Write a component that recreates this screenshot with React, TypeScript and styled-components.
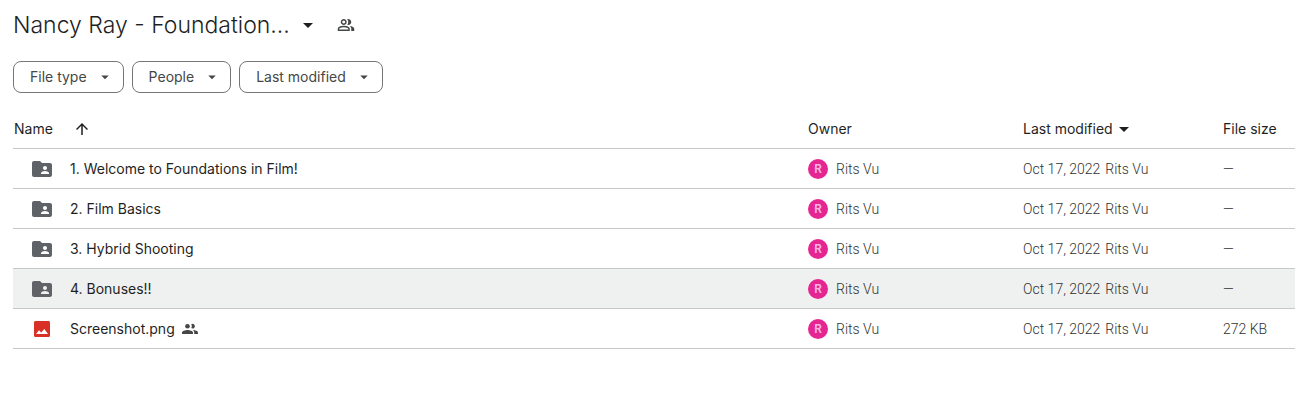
import React from "react";
import styled, { createGlobalStyle } from "styled-components";

const GlobalStyle = createGlobalStyle`
  * { box-sizing: border-box; }
  body {
    margin: 0;
    background: #ffffff;
    color: #1f1f1f;
    font-family: Inter, "Liberation Sans", sans-serif;
    font-size: 14px;
    line-height: 20px;
  }
`;

const Page = styled.main`
  padding: 8px 0 0 13px;
`;

const TitleBar = styled.header`
  display: flex;
  align-items: center;
  height: 33px;
`;

const Title = styled.h1`
  margin: 0;
  font-family: Inter, sans-serif;
  font-size: 23px;
  line-height: 32px;
  font-weight: 300;
  white-space: nowrap;
`;

const IconButton = styled.button<{ $gap: number; $color?: string }>`
  display: flex;
  margin: 0 0 0 ${(p) => p.$gap}px;
  padding: 0;
  border: 0;
  background: none;
  color: ${(p) => p.$color ?? "#1f1f1f"};
  cursor: pointer;
`;

const Icon = styled.svg<{ $size: number }>`
  display: block;
  flex: none;
  width: ${(p) => p.$size}px;
  height: ${(p) => p.$size}px;
  fill: currentColor;
`;

const Filters = styled.div`
  display: flex;
  gap: 8px;
  margin-top: 20px;
`;

const Chip = styled.button`
  display: flex;
  align-items: center;
  gap: 9px;
  height: 32px;
  padding: 0 9px 0 16px;
  border: 1px solid #747775;
  border-radius: 8px;
  background: #ffffff;
  color: #444746;
  font: inherit;
  white-space: nowrap;
  cursor: pointer;
`;

const FileTable = styled.table`
  width: 100%;
  margin-top: 16px;
  border-collapse: separate;
  border-spacing: 0;
  table-layout: fixed;
`;

const Col = styled.col<{ $width?: number }>`
  width: ${(p) => (p.$width ? `${p.$width}px` : "auto")};
`;

const HeadCell = styled.th`
  height: 40px;
  padding: 0 0 0 1px;
  border-bottom: 1px solid #c7c7c7;
  text-align: left;
  font-weight: 400;
  white-space: nowrap;
`;

const HeadContent = styled.div<{ $gap?: number }>`
  display: flex;
  align-items: center;
  gap: ${(p) => p.$gap ?? 0}px;
`;

const Row = styled.tr<{ $active?: boolean }>`
  background: ${(p) => (p.$active ? "#eff1f0" : "transparent")};
`;

const Cell = styled.td`
  height: 40px;
  padding: 0 0 0 1px;
  border-bottom: 1px solid #c7c7c7;
  color: #303332;
  font-family: Roboto, sans-serif;
  font-weight: 300;
  white-space: nowrap;
`;

const NameCell = styled(Cell)`
  padding-left: 17px;
  color: #1f1f1f;
  font-family: Inter, sans-serif;
  font-weight: 400;
`;

const NameContent = styled.div`
  display: flex;
  align-items: center;
`;

const FileIcon = styled.span<{ $color: string }>`
  display: flex;
  justify-content: center;
  width: 24px;
  margin-right: 16px;
  color: ${(p) => p.$color};
`;

const Shared = styled.span`
  margin-left: 7px;
  color: #444746;
`;

const Owner = styled.div`
  display: flex;
  align-items: center;
  gap: 8px;
`;

const Avatar = styled.span`
  display: flex;
  align-items: center;
  justify-content: center;
  width: 20px;
  height: 20px;
  border-radius: 50%;
  background: #e52592;
  color: #fbb4df;
  font-size: 12px;
  font-weight: 600;
`;

const Modified = styled.div`
  display: flex;
  gap: 5px;
`;

const DropArrow = ({ size }: { size: number }) => (
  <Icon $size={size} viewBox="0 0 24 24" aria-hidden="true">
    <path d="M7 10l5 5 5-5z" />
  </Icon>
);

const Caret = () => (
  <Icon $size={10} viewBox="0 0 10 10" aria-hidden="true">
    <path d="M0 3l5 5 5-5z" />
  </Icon>
);

const UpArrow = () => (
  <Icon $size={18} viewBox="0 0 24 24" aria-hidden="true">
    <path d="M4 12l1.41 1.41L11 7.83V20h2V7.83l5.58 5.59L20 12l-8-8-8 8z" />
  </Icon>
);

const GroupOutline = () => (
  <Icon $size={18} viewBox="0 0 24 24" aria-hidden="true">
    <path
      fillRule="evenodd"
      d="M1 20v-2.8q0-.85.438-1.562.437-.713 1.162-1.088 1.55-.775 3.15-1.163Q7.35 13 9 13t3.25.387q1.6.388 3.15 1.163.725.375 1.162 1.088Q17 16.35 17 17.2V20ZM3 18h12v-.8q0-.275-.137-.5-.138-.225-.363-.35-1.35-.675-2.725-1.013Q10.4 15 9 15t-2.775.337Q4.85 15.675 3.5 16.35q-.225.125-.362.35-.138.225-.138.5ZM19 20v-3q0-1.1-.613-2.113-.612-1.012-1.737-1.737 1.275.15 2.4.512 1.125.363 2.1.888.9.5 1.375 1.112Q23 16.275 23 17v3ZM9 12q-1.65 0-2.825-1.175Q5 9.65 5 8q0-1.65 1.175-2.825Q7.35 4 9 4q1.65 0 2.825 1.175Q13 6.35 13 8q0 1.65-1.175 2.825Q10.65 12 9 12ZM9 10q.825 0 1.413-.588Q11 8.825 11 8t-.587-1.412Q9.825 6 9 6t-1.412.588Q7 7.175 7 8t.588 1.412Q8.175 10 9 10ZM19 8q0 1.65-1.175 2.825Q16.65 12 15 12q-.275 0-.7-.062-.425-.063-.7-.138.675-.8 1.037-1.775Q15 9.05 15 8q0-1.05-.363-2.025Q14.275 5 13.6 4.2q.35-.125.7-.163Q14.65 4 15 4q1.65 0 2.825 1.175Q19 6.35 19 8Z"
    />
  </Icon>
);

const GroupFilled = () => (
  <Icon $size={16} viewBox="0 0 16 16" role="img" aria-label="Shared">
    <circle cx="5.5" cy="5.2" r="2.3" />
    <path d="M9.3 7.1a3.6 3.6 0 0 0 0-3.8A2.3 2.3 0 1 1 9.3 7.1z" />
    <path d="M0 13v-1.4C0 9.8 3.4 8.9 5.5 8.9S11 9.8 11 11.600V13z" />
    <path d="M12.200 13v-1.500c0-1-.5-1.800-1.300-2.400 2.300.1 5.100.9 5.100 2.500V13z" />
  </Icon>
);

const FolderShared = () => (
  <Icon $size={24} viewBox="0 0 24 24" aria-hidden="true">
    <path d="M20 6h-8l-2-2H4c-1.1 0-1.99.9-1.99 2L2 18c0 1.1.9 2 2 2h16c1.1 0 2-.9 2-2V8c0-1.1-.9-2-2-2zm-5 3c1.1 0 2 .9 2 2s-.9 2-2 2-2-.9-2-2 .9-2 2-2zm4 8h-8v-1c0-1.33 2.67-2 4-2s4 .67 4 2v1z" />
  </Icon>
);

const ImageFile = () => (
  <Icon $size={16} viewBox="0 0 16 16" aria-hidden="true">
    <path
      fillRule="evenodd"
      d="M14.500 0h-13C.7 0 0 .7 0 1.500v13c0 .8.7 1.500 1.500 1.500h13c.8 0 1.500-.7 1.500-1.500v-13C16 .7 15.300 0 14.500 0zM2 13l3-3.800 2.200 2.300L10.300 8 14 13z"
    />
  </Icon>
);

type FileEntry = {
  name: string;
  kind: "folder" | "image";
  size: string;
  shared?: boolean;
  active?: boolean;
};

const files: FileEntry[] = [
  { name: "1. Welcome to Foundations in Film!", kind: "folder", size: "—" },
  { name: "2. Film Basics", kind: "folder", size: "—" },
  { name: "3. Hybrid Shooting", kind: "folder", size: "—" },
  { name: "4. Bonuses!!", kind: "folder", size: "—", active: true },
  { name: "Screenshot.png", kind: "image", size: "272 KB", shared: true },
];

const filters = ["File type", "People", "Last modified"];

export default function App() {
  return (
    <>
      <GlobalStyle />
      <Page>
        <TitleBar>
          <Title>Nancy Ray - Foundation...</Title>
          <IconButton $gap={6} aria-label="Folder actions">
            <DropArrow size={24} />
          </IconButton>
          <IconButton $gap={17} $color="#444746" aria-label="Manage access">
            <GroupOutline />
          </IconButton>
        </TitleBar>
        <Filters>
          {filters.map((label) => (
            <Chip key={label}>
              {label}
              <DropArrow size={18} />
            </Chip>
          ))}
        </Filters>
        <FileTable>
          <colgroup>
            <Col />
            <Col $width={215} />
            <Col $width={200} />
            <Col $width={73} />
          </colgroup>
          <thead>
            <tr>
              <HeadCell scope="col">
                <HeadContent $gap={20}>
                  Name
                  <UpArrow />
                </HeadContent>
              </HeadCell>
              <HeadCell scope="col">Owner</HeadCell>
              <HeadCell scope="col">
                <HeadContent $gap={6}>
                  Last modified
                  <Caret />
                </HeadContent>
              </HeadCell>
              <HeadCell scope="col">File size</HeadCell>
            </tr>
          </thead>
          <tbody>
            {files.map((file) => (
              <Row key={file.name} $active={file.active}>
                <NameCell>
                  <NameContent>
                    <FileIcon $color={file.kind === "folder" ? "#5f6368" : "#d93025"}>
                      {file.kind === "folder" ? <FolderShared /> : <ImageFile />}
                    </FileIcon>
                    {file.name}
                    {file.shared && (
                      <Shared>
                        <GroupFilled />
                      </Shared>
                    )}
                  </NameContent>
                </NameCell>
                <Cell>
                  <Owner>
                    <Avatar aria-hidden="true">R</Avatar>
                    Rits Vu
                  </Owner>
                </Cell>
                <Cell>
                  <Modified>
                    <span>Oct 17, 2022</span>
                    <span>Rits Vu</span>
                  </Modified>
                </Cell>
                <Cell>{file.size}</Cell>
              </Row>
            ))}
          </tbody>
        </FileTable>
      </Page>
    </>
  );
}
